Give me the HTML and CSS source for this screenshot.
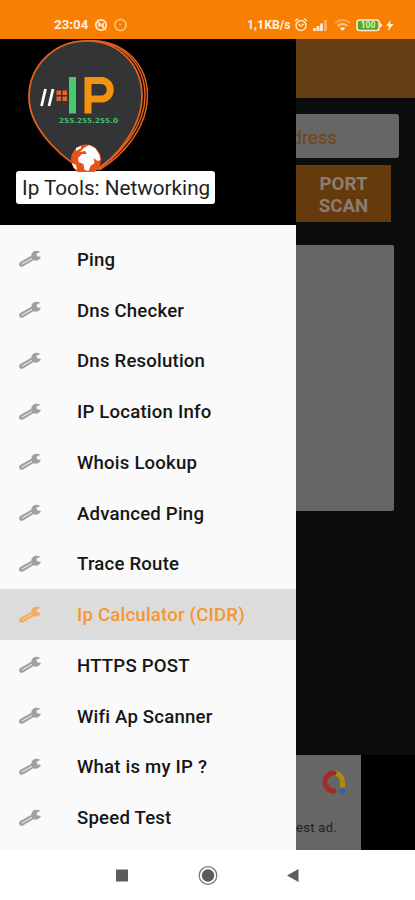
FILE: index.html
```html
<!DOCTYPE html>
<html lang="en">
<head>
<meta charset="utf-8">
<title>Ip Tools: Networking</title>
<link rel="stylesheet" href="styles.css">
</head>
<body>
<svg class="defs" width="0" height="0">
  <symbol id="wrench" viewBox="0 0 24 18">
    <path d="M2.600 11.700L13.400 5.800C13.200 2.800 15.800 .7 19 .8L22.600 1.700L18.600 3.800L19 6.300L23 7C21.600 10 18.400 11.400 15.400 10.200L4.600 16.700C1.600 17.700-.6 13.800 2.600 11.700Z" fill="currentColor"/>
    <path d="M4.200 14L13.500 8.600" stroke="var(--slot)" stroke-width="1.300" stroke-linecap="round"/>
  </symbol>
</svg>
<div class="phone">
  <header class="status">
    <span class="clock">23:04</span>
    <svg class="status-left" width="36" height="16" viewBox="0 0 36 16" fill="none" stroke="#ffe9d2">
      <circle cx="7" cy="8" r="5.200" stroke-width="1.800"/>
      <path d="M5 10V6l4 4V6M9 10l3 3" stroke-width="1.600"/>
      <circle cx="26.500" cy="8" r="5.600" stroke="#ffc68a" stroke-width="1.500"/>
      <path d="M25 7l2 1" stroke="#ffc68a"/>
    </svg>
    <span class="speed">1,1KB/s</span>
    <svg class="status-right" width="102" height="18" viewBox="0 0 102 18" fill="none">
      <g stroke="#ffe4c8" stroke-width="1.500"><circle cx="8" cy="9.500" r="5"/><path d="M2 5l3-2.500M14 5l-3-2.500M5.500 8l2.500 2 3-2"/></g>
      <path d="M20 15v-3h3v3zM23.500 15v-5h3v5zM27 15V7.500h3v7.500z" fill="#ffe4c8"/><path d="M31 15V4h3v11z" fill="#ffad5c"/>
      <path d="M42 7q7.500-6 15 0" stroke="#ffa552" stroke-width="2"/><path d="M44.500 10q5-4 10 0" stroke="#ffc68a" stroke-width="2"/><path d="M46.500 11.500h6l-3 3.500z" fill="#fff0df"/>
      <rect x="64" y="4" width="22" height="10.500" rx="2.500" fill="#56a81d" stroke="#ffe9d2" stroke-width="1.600"/><path d="M87 6.500l2.500 2.800-2.500 2.700z" fill="#ffe9d2"/>
      <text x="75" y="12.300" class="charge">100</text>
      <path d="M98 4L93 10h3l-1 5 5.500-7h-3.600z" fill="#fff0df"/>
    </svg>
  </header>
  <main class="stage">
    <aside class="drawer">
      <div class="brand">
        <svg class="logo" width="124" height="133" viewBox="0 0 124 133">
          <g fill="none" stroke="#e4601d" stroke-width="1.500">
            <path d="M62 1.800C98 1 120.500 26 120.500 57C120.500 88 97 116 72 131"/>
            <path d="M62 1.800C96 1 118 27 118 57C118 87 94 115 70 131"/>
            <path d="M61 132C40 124 2 92 2 58C2 27 27 1.800 60 1.800C93 1.800 115 27 115 57C115 87 90 120 66 132" fill="#333435" stroke-width="1.800"/>
          </g>
          <path d="M18.500 50L14.500 67M26 50L22 67" stroke="#fff" stroke-width="2.800"/>
          <path d="M29.500 51.500h4.500v4.500h-4.500zM35.500 51.500h4.500v4.500h-4.500zM29.500 57.500h4.500v4.500h-4.500zM35.500 57.500h4.500v4.500h-4.500z" fill="#df642b"/>
          <path d="M42 38h7v36.500h-7z" fill="#49c871"/>
          <path d="M61 74.500V41.500h13.500a8.500 9 0 0 1 0 18.500H61" fill="none" stroke="#f4930e" stroke-width="7"/>
          <text x="61.500" y="83.700" class="mask" textLength="59" lengthAdjust="spacingAndGlyphs">255.255.255.0</text>
          <circle cx="59" cy="120.500" r="15" fill="#e65319"/>
          <path d="M57 109l5-3 6 3 4 6 1.500 6-3 1-4-3 1 5-4 3-2 5-4-1-1-6-5-2-.5-4 4-4 5 0-2-3-5 1zM49 109l5-2 0 2-5 3zM45 124l4 2 1 5-3-2z" fill="#fff"/>
        </svg>
        <div class="title">Ip Tools: Networking</div>
      </div>
      <nav class="menu">
        <a class="item"><svg class="tool"><use href="#wrench"/></svg><span>Ping</span></a>
        <a class="item"><svg class="tool"><use href="#wrench"/></svg><span>Dns Checker</span></a>
        <a class="item"><svg class="tool"><use href="#wrench"/></svg><span>Dns Resolution</span></a>
        <a class="item"><svg class="tool"><use href="#wrench"/></svg><span>IP Location Info</span></a>
        <a class="item"><svg class="tool"><use href="#wrench"/></svg><span>Whois Lookup</span></a>
        <a class="item"><svg class="tool"><use href="#wrench"/></svg><span>Advanced Ping</span></a>
        <a class="item"><svg class="tool"><use href="#wrench"/></svg><span>Trace Route</span></a>
        <a class="item active"><svg class="tool"><use href="#wrench"/></svg><span>Ip Calculator (CIDR)</span></a>
        <a class="item"><svg class="tool"><use href="#wrench"/></svg><span>HTTPS POST</span></a>
        <a class="item"><svg class="tool"><use href="#wrench"/></svg><span>Wifi Ap Scanner</span></a>
        <a class="item"><svg class="tool"><use href="#wrench"/></svg><span>What is my IP ?</span></a>
        <a class="item"><svg class="tool"><use href="#wrench"/></svg><span>Speed Test</span></a>
      </nav>
    </aside>
    <section class="page">
      <div class="appbar"></div>
      <div class="field"><span>dress</span></div>
      <div class="scan">PORT<br>SCAN</div>
      <div class="output"></div>
      <div class="ad-strip">
        <div class="ad">
          <svg width="26" height="26" viewBox="0 0 26 26" fill="none" stroke-width="5" stroke-linecap="round">
            <path d="M13 4a8.500 9 0 0 1 8.500 9v8" stroke="#b08a08"/>
            <path d="M13 4a9 9 0 1 0 0 18" stroke="#a52a25"/>
            <circle cx="21.500" cy="21.500" r="2.900" fill="#2f5fae"/>
          </svg>
          <span>est ad.</span>
        </div>
      </div>
    </section>
  </main>
  <footer class="navbar">
    <svg width="415" height="50" viewBox="0 0 415 50">
      <rect x="116" y="19.500" width="12" height="12" fill="#5c5c5c"/>
      <circle cx="208" cy="25.500" r="8.800" fill="none" stroke="#777" stroke-width="1.300"/>
      <circle cx="208" cy="25.500" r="6.200" fill="#5a5a5a"/>
      <path d="M298.500 19v13L287 25.500z" fill="#5c5c5c"/>
    </svg>
  </footer>
</div>
</body>
</html>
```
FILE: styles.css
```css
* { box-sizing: border-box; }
body { margin: 0; font-family: Roboto, "Liberation Sans", sans-serif; }
.defs { display: block; }
.phone { width: 415px; height: 900px; display: flex; flex-direction: column; overflow: hidden; background: #fff; }

.status { height: 39px; flex: none; display: flex; align-items: center; padding: 10px 0 0 54px; background: #f87f02; color: #fff0df; font-size: 13px; font-weight: 700; }
.clock { width: 35px; font-size: 13.3px; }
.status-left { margin-left: 5px; }
.speed { margin-left: 117px; width: 46px; font-size: 12.3px; white-space: nowrap; }
.charge { font-size: 8.5px; font-weight: 700; fill: #d9f5c4; text-anchor: middle; }

.stage { height: 811px; flex: none; display: grid; grid-template-columns: 296px 119px; }
.drawer { background: #fafafa; overflow: hidden; }
.brand { height: 186px; padding-left: 16px; background: #000; }
.logo { display: block; margin-left: 11px; }
.mask { font: 700 7px "DejaVu Sans", sans-serif; fill: #43bd6d; text-anchor: middle; }
.title { width: 199px; height: 33px; margin-top: -1px; padding-left: 6px; border-radius: 3px; background: #fff; color: #222; font-size: 20.7px; line-height: 35px; white-space: nowrap; }
.menu { padding-top: 9px; }
.item { --slot: #ddd; height: 50.75px; display: flex; align-items: center; padding-left: 18px; color: #161616; font-size: 18.6px; font-weight: 500; letter-spacing: .2px; }
.item span { padding-top: 1px; }
.tool { width: 24px; height: 18px; margin-right: 35px; color: #a0a0a0; }
.active { --slot: #e9cba7; background: #dcdcdc; color: #f7962f; }
.active .tool { color: #f2ac62; }

.page { display: flex; flex-direction: column; background: #0b0c0c; overflow: hidden; }
.appbar { height: 59px; background: #643f13; }
.field { width: 103px; height: 44px; margin-top: 16px; border-radius: 0 3px 3px 0; background: #666; color: #704415; display: flex; align-items: center; justify-content: flex-end; padding: 3px 62px 0 0; font-size: 18.5px; }
.scan { width: 95px; height: 57px; margin-top: 7px; padding-top: 7.5px; background: #653a0d; color: #8b7d70; text-align: center; font-size: 18.7px; line-height: 22px; font-weight: 700; }
.output { width: 98px; height: 266px; margin-top: 23px; border-radius: 0 2px 2px 0; background: #666; }
.ad-strip { height: 95px; margin-top: auto; background: #000; }
.ad { width: 65px; height: 95px; background: #666; color: #222; display: flex; flex-direction: column; padding-top: 14px; }
.ad svg { margin-left: 25px; }
.ad span { margin-top: 25px; font-size: 13px; line-height: 16px; letter-spacing: .3px; white-space: nowrap; }
.navbar { height: 50px; }
.navbar svg { display: block; }
```
